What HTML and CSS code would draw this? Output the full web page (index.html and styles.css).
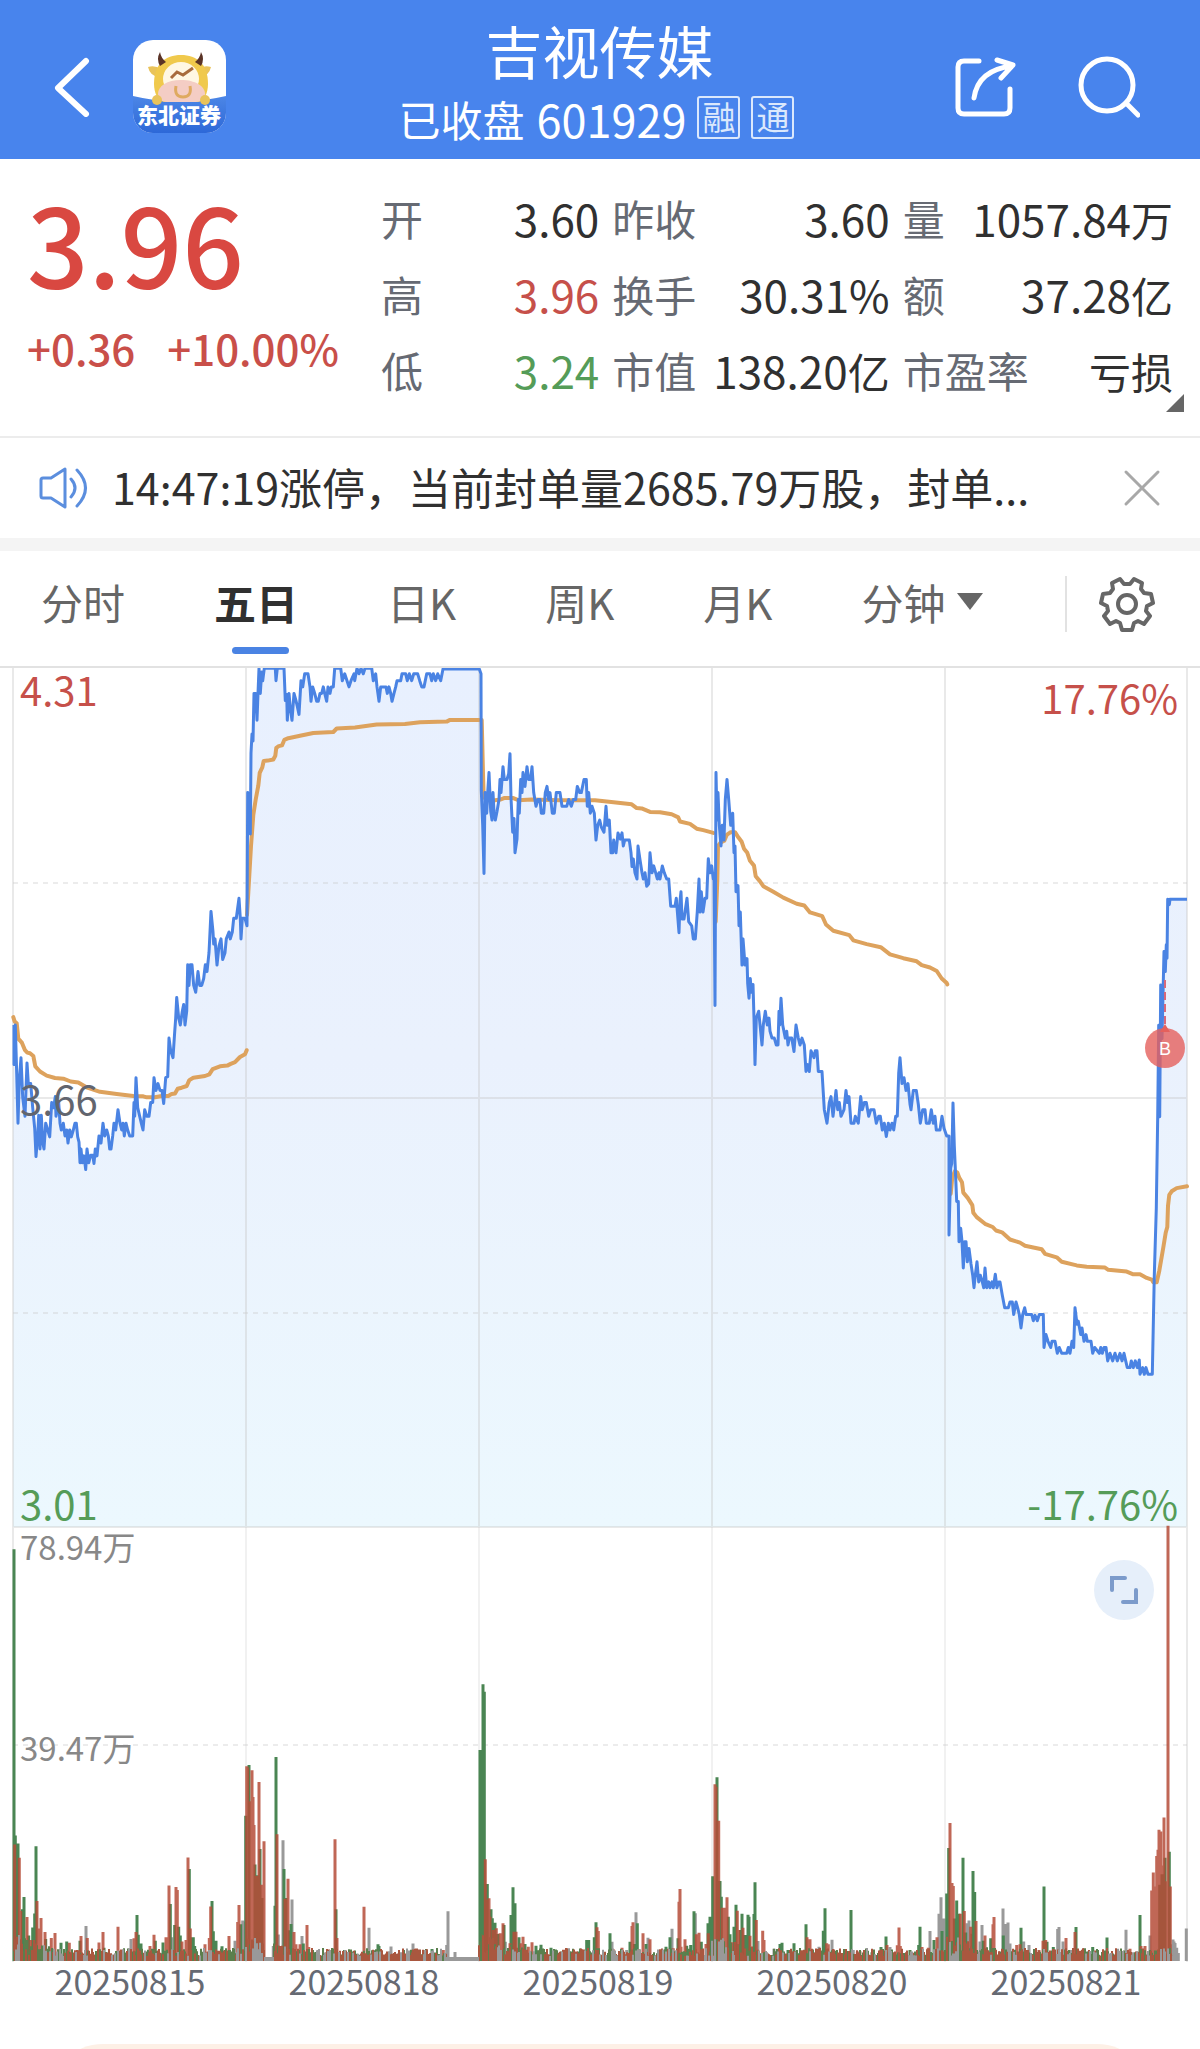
FILE: index.html
```html
<!DOCTYPE html>
<html lang="zh-CN">
<head>
<meta charset="utf-8">
<meta name="viewport" content="width=device-width, initial-scale=1">
<title>吉视传媒 601929</title>
<link rel="stylesheet" href="styles.css">
</head>
<body>
<header class="topbar">
  <div class="topbar-side">
    <button class="icon-btn" type="button" aria-label="返回">
      <svg width="40" height="60" viewBox="0 0 40 60" fill="none" stroke="#fff" stroke-width="6" stroke-linecap="round" stroke-linejoin="round"><path d="M33 4 5 31l28 26"/></svg>
    </button>
    <a class="broker" href="#" aria-label="东北证券">
      <svg width="93" height="93" viewBox="0 0 93 93">
        <defs>
          <clipPath id="logo-clip"><rect width="93" height="93" rx="20"/></clipPath>
          <linearGradient id="logo-blue" x1="0" y1="0" x2="0" y2="1"><stop offset="0" stop-color="#4c86e6"/><stop offset="1" stop-color="#2d68d8"/></linearGradient>
        </defs>
        <g clip-path="url(#logo-clip)">
          <rect width="93" height="93" fill="#fff"/>
          <path d="M0 56q46 11 93 0v37H0z" fill="url(#logo-blue)"/>
          <path d="M15 27q7-2 13 2l-2 8q-9-1-11-10zM78 27q-7-2-13 2l2 8q9-1 11-10z" fill="#e9c35a"/>
          <path d="M21 44c0-20 11-29 27-29s27 9 27 29c0 9-4 17-10 18H31c-6-1-10-9-10-18z" fill="#f0c94c"/>
          <path d="M27 12q-4 7 0 14l6-4q-5-4-6-10zM68 12q4 7 0 14l-6-4q5-4 6-10z" fill="#5a3326"/>
          <ellipse cx="48" cy="39" rx="18" ry="17" fill="#fff7e4"/>
          <path d="M38 38l6-6 6 3 10-7" fill="none" stroke="#a86b3d" stroke-width="3"/>
          <path d="M25 54c0-8 9-14 23-14s24 6 24 14c0 5-4 8-9 8H34c-5 0-9-3-9-8z" fill="#f4cdc4"/>
          <path d="M43 46q-2 11 7 11t7-11" fill="none" stroke="#dfaa60" stroke-width="3"/>
          <circle cx="24" cy="60" r="5" fill="#e9c35a"/><circle cx="72" cy="60" r="5" fill="#e9c35a"/>
        </g>
        <text x="46" y="83" text-anchor="middle" class="broker-name">东北证券</text>
      </svg>
    </a>
  </div>
  <div class="heading">
    <h1>吉视传媒</h1>
    <p class="subline"><span class="state">已收盘</span><span class="code">601929</span><span class="tag">融</span><span class="tag">通</span></p>
  </div>
  <div class="topbar-side topbar-actions">
    <button class="icon-btn" type="button" aria-label="分享">
      <svg width="62" height="62" viewBox="0 0 62 62" fill="none" stroke="#fff" stroke-width="5" stroke-linecap="round" stroke-linejoin="round"><path d="M25 5H10q-6 0-6 6v41q0 6 6 6h40q6 0 6-6V33M20 42Q24 14 58 10M43 4l16 5-12 13"/></svg>
    </button>
    <button class="icon-btn" type="button" aria-label="搜索">
      <svg width="62" height="62" viewBox="0 0 62 62" fill="none" stroke="#fff" stroke-width="5" stroke-linecap="round"><circle cx="29" cy="29" r="26"/><path d="M48 47l12 12"/></svg>
    </button>
  </div>
</header>

<section class="quote">
  <div class="last">
    <strong class="price">3.96</strong>
    <p class="change"><span>+0.36</span><span>+10.00%</span></p>
  </div>
  <dl class="stats">
    <div><dt>开</dt><dd>3.60</dd></div>
    <div><dt>昨收</dt><dd>3.60</dd></div>
    <div><dt>量</dt><dd>1057.84<span class="unit">万</span></dd></div>
    <div><dt>高</dt><dd class="up">3.96</dd></div>
    <div><dt>换手</dt><dd>30.31%</dd></div>
    <div><dt>额</dt><dd>37.28<span class="unit">亿</span></dd></div>
    <div><dt>低</dt><dd class="down">3.24</dd></div>
    <div><dt>市值</dt><dd>138.20<span class="unit">亿</span></dd></div>
    <div><dt>市盈率</dt><dd><span class="unit">亏损</span></dd></div>
  </dl>
  <svg class="more" width="18" height="18" viewBox="0 0 18 18"><path d="M18 0v18H0z" fill="#666"/></svg>
</section>

<section class="notice">
  <svg width="50" height="44" viewBox="0 0 50 44" fill="none" stroke="#5b8ede" stroke-width="3" stroke-linecap="round" stroke-linejoin="round"><path d="M26 3v38L12 32H4q-2 0-2-2V14q0-2 2-2h8zM32 13q8 9 0 18M38 4q17 18 0 36"/></svg>
  <p>14:47:19涨停，当前封单量2685.79万股，封单...</p>
  <button class="icon-btn" type="button" aria-label="关闭">
    <svg width="38" height="38" viewBox="0 0 38 38" stroke="#a8a8a8" stroke-width="3" stroke-linecap="round"><path d="M3 3l32 32M35 3 3 35"/></svg>
  </button>
</section>

<nav class="tabs">
  <div class="periods">
    <button type="button">分时</button>
    <button type="button" class="active">五日</button>
    <button type="button">日K</button>
    <button type="button">周K</button>
    <button type="button">月K</button>
    <button type="button" class="menu">分钟<svg width="26" height="17" viewBox="0 0 26 17"><path d="M0 0h26L13 17z" fill="#666"/></svg></button>
  </div>
  <button type="button" class="settings" aria-label="设置">
    <svg width="56" height="56" viewBox="-28 -28 56 56" fill="none" stroke="#666" stroke-width="4" stroke-linejoin="round"><path d="M-5 26H5L7 19 11 17 17 20 23 12 19 7 20 2 26-1 24-10 17-11 14-15 15-21 7-25 3-20H-3L-7-25-15-21-14-15-17-11-24-10-26-1-20 2-19 7-23 12-17 20-11 17-7 19z"/><circle r="9"/></svg>
  </button>
</nav>

<main class="chart">
  <svg class="plot" viewBox="0 0 1200 1294" aria-label="五日走势">
    <defs>
      <linearGradient id="area-fill" gradientUnits="userSpaceOnUse" x1="0" y1="0" x2="0" y2="859"><stop offset="0" stop-color="#e8f0fe"/><stop offset=".45" stop-color="#eaf1fd"/><stop offset="1" stop-color="#ecf8fe"/></linearGradient>
    </defs>
    <path id="area" fill="url(#area-fill)"/>
    <g fill="none" stroke="#c8c8c8" stroke-opacity=".4" stroke-width="2">
      <path d="M13 0V1294M1187 0V1294M246 0V859M479 0V859M712 0V859M945 0V859M13 430H1187M13 859H1187"/>
      <path d="M246 859V1294M479 859V1294M712 859V1294M945 859V1294" stroke-opacity=".25"/>
      <path d="M13 215H1187M13 645H1187M13 1077H1187" stroke-dasharray="5 5" stroke-opacity=".35"/>
    </g>
    <g id="average" fill="none" stroke="#dda25d" stroke-width="4" stroke-linejoin="round" stroke-linecap="round"></g>
    <path id="price" fill="none" stroke="#4a83e3" stroke-width="3" stroke-linejoin="round"/>
    <g fill="none">
      <g stroke-width="3">
        <path id="vol-flat" stroke="#999"/>
        <path id="vol-down" stroke="#4a8553"/>
        <path id="vol-up" stroke="#b54c38" stroke-opacity=".85"/>
      </g>
      <g stroke-width="2">
        <path id="noise-down" stroke="#5b7f4d"/>
        <path id="noise-up" stroke="#a9573f"/>
        <path id="noise-flat" stroke="#999"/>
      </g>
    </g>
    <path d="M1165 312V360" stroke="#d8697b" stroke-width="2" stroke-dasharray="8 4"/>
    <path d="M1160 364l5-8 5 8z" fill="#e5605c"/>
    <circle cx="1165" cy="380" r="20" fill="#e5605c" fill-opacity=".8"/>
    <text x="1165" y="387" text-anchor="middle" class="buy">B</text>
  </svg>
  <span class="label top-left up">4.31</span>
  <span class="label middle">3.66</span>
  <span class="label low down">3.01</span>
  <span class="label top-right up">17.76%</span>
  <span class="label low-right down">-17.76%</span>
  <span class="label vol vol-max">78.94万</span>
  <span class="label vol vol-mid">39.47万</span>
  <button class="expand" type="button" aria-label="全屏">
    <svg width="32" height="32" viewBox="0 0 32 32" fill="none" stroke="#7c9bcb" stroke-width="4" stroke-linecap="round"><path d="M4 16V4h13M28 16v12H15"/></svg>
  </button>
</main>
<div class="dates"><time>20250815</time><time>20250818</time><time>20250819</time><time>20250820</time><time>20250821</time></div>
<div class="sheet"><div class="sheet-card"></div></div>
<script src="chart.js"></script>
</body>
</html>
```
FILE: styles.css
```css
* { box-sizing: border-box; }
body {
  margin: 0;
  background: #fff;
  color: #303030;
  font-family: "Noto Sans CJK SC", "Noto Sans", sans-serif;
  font-size: 42px;
  line-height: 60px;
}
h1, p, dl, dd { margin: 0; }
button {
  padding: 0;
  border: 0;
  background: none;
  color: inherit;
  font: inherit;
}
svg { display: block; }
.up { color: #c6504a; }
.down { color: #559c58; }

.topbar {
  display: grid;
  grid-template-columns: 1fr auto 1fr;
  height: 159px;
  padding: 0 60px 0 53px;
  background: #4884ed;
  color: #fff;
}
.topbar-side {
  display: flex;
  align-items: center;
  gap: 40px;
  padding-top: 14px;
}
.topbar-actions { justify-content: flex-end; gap: 62px; }
.broker-name { font-size: 21px; font-weight: 900; fill: #fff; }
.heading { text-align: center; }
h1 {
  padding: 11px 0 0 6px;
  font-size: 57px;
  font-weight: 400;
  line-height: 76px;
}
.subline {
  display: flex;
  align-items: center;
  height: 64px;
}
.state { margin-right: 12px; }
.code { font-size: 45px; }
.tag {
  width: 43px;
  height: 43px;
  margin: 0 0 4px 11px;
  border: 2px solid #dbe8fc;
  border-radius: 3px;
  color: #dbe8fc;
  font-size: 33px;
  font-weight: 400;
  line-height: 37px;
}

.quote {
  position: relative;
  display: flex;
  justify-content: space-between;
  height: 279px;
  padding: 21px 27px 0 27px;
  border-bottom: 2px solid #ececec;
}
.last { color: #c94f49; font-weight: 500; }
.price {
  display: block;
  padding-top: 6px;
  color: #d94841;
  font-size: 108px;
  font-weight: 500;
  line-height: 110px;
}
.change {
  display: flex;
  gap: 32px;
  padding-top: 22px;
}
.stats {
  display: grid;
  grid-template-columns: 218fr 277fr 270fr;
  grid-auto-rows: 76px;
  column-gap: 13px;
  flex: 0 0 792px;
}
.stats div { display: flex; justify-content: space-between; align-items: center; white-space: nowrap; }
.stats dt { color: #666a73; }
.stats dd { font-size: 44px; }
.unit { font-size: 42px; }
.more { position: absolute; right: 16px; bottom: 24px; }

.notice {
  display: flex;
  align-items: center;
  height: 100px;
  padding: 0 39px;
}
.notice p {
  flex: 1;
  margin-left: 23px;
  padding-bottom: 4px;
  overflow: hidden;
  font-size: 43px;
  white-space: nowrap;
}

.tabs {
  display: flex;
  justify-content: space-between;
  align-items: center;
  height: 130px;
  padding: 0 45px 10px 41px;
  border-top: 13px solid #f4f4f4;
  border-bottom: 2px solid #e2e2e2;
  color: #666;
}
.periods {
  display: flex;
  gap: 89px;
  padding-bottom: 4px;
}
.periods button { position: relative; white-space: nowrap; }
.periods .active { color: #303030; font-weight: 700; }
.periods .active::after {
  content: "";
  position: absolute;
  bottom: -22px;
  left: 18px;
  width: 57px;
  height: 7px;
  border-radius: 4px;
  background: #4a83e3;
}
.periods .menu { display: flex; align-items: center; gap: 12px; }
.settings {
  padding-left: 32px;
  border-left: 2px solid #e2e2e2;
}

.chart { position: relative; }
.plot { width: 100%; height: auto; }
.buy { fill: #fff; font: 18px "Liberation Sans", sans-serif; }
.label {
  position: absolute;
  left: 20px;
  font-size: 40px;
  line-height: 40px;
}
.top-left { top: 1px; }
.middle { top: 410px; color: #62656e; }
.low { top: 815px; }
.top-right { top: 9px; right: 22px; left: auto; }
.low-right { top: 815px; right: 22px; left: auto; }
.vol { color: #888; font-size: 33px; }
.vol-max { top: 858px; }
.vol-mid { top: 1059px; }
.expand {
  position: absolute;
  top: 892px;
  right: 46px;
  display: grid;
  place-items: center;
  width: 60px;
  height: 60px;
  border-radius: 50%;
  background: #e6effa;
}
.dates {
  display: grid;
  grid-template-columns: repeat(5, 1fr);
  height: 82px;
  padding: 0 17px 0 13px;
  color: #666a73;
  font-size: 34px;
  line-height: 38px;
  text-align: center;
}
.sheet { height: 5px; padding: 0 48px; overflow: hidden; }
.sheet-card { height: 110px; border-radius: 55px; background: #fdf0e6; }
```
FILE: chart.js
```js
// Each run of samples is digitised on its own grid: x0, y0 and the units per pixel.
const GRID = {
  left: [0, -8, 3, 2.904],
  middle: [460, -8, 3, 2.904],
  right: [900, 192, 3, 2.24]
};
const toPoints = (grid, text) => {
  const [x0, y0, kx, ky] = GRID[grid];
  return text.trim().split(/\s+/).map(pair => {
    const [x, y] = pair.split(',').map(Number);
    return (x0 + x / kx).toFixed(1) + ' ' + (y0 + y / ky).toFixed(1);
  });
};

const price = [
  ...toPoints('left', `42,1060 42,1175 46,1060 50,1200 54,1345 58,1220 63,1155 68,1270 75,1325 81,1170 85,1230 92,1230 98,1300 104,1360 108,1442 113,1380 116,1322 120,1420 124,1322 128,1400 132,1420 137,1345 143,1365 149,1385 155,1285 161,1300 166,1268 168,1325 176,1285 180,1345 184,1365 190,1345 195,1382 200,1365 204,1403 209,1365 214,1385 220,1365 225,1345 229,1345 233,1385 237,1400 240,1460 243,1420 247,1460 252,1440 257,1480 261,1420 266,1460 272,1438 278,1438 282,1462 286,1420 291,1440 297,1382 303,1403 309,1345 314,1382 320,1365 325,1382 329,1420 333,1420 338,1382 342,1345 347,1365 354,1306 360,1345 365,1365 369,1345 373,1382 378,1345 383,1365 389,1382 398,1382 402,1285 404,1325 408,1213 413,1300 419,1325 424,1345 429,1365 434,1306 440,1325 447,1325 452,1285 458,1285 462,1213 468,1250 474,1230 480,1250 486,1250 491,1288 497,1213 503,1210 507,1098 512,1135 519,1155 524,1080 527,1040 530,980 536,1040 541,1060 547,1020 551,1000 555,1060 560,1020 563,885 567,945 571,885 576,885 581,945 587,965 594,905 599,945 605,945 611,925 616,885 621,905 627,850 633,730 639,790 641,825 645,810 651,886 657,830 663,810 668,870 675,850 679,810 687,790 691,810 697,790 701,750 709,750 717,692 721,750 723,810 727,750 735,750 741,772 743,385 747,480 751,505 753,270 756,215 759,235 762,97 767,97 771,175 774,97 777,24 781,97 785,35 788,60 793,24 826,24 828,60 832,24 852,24 856,118 860,100 862,175 867,97 871,140 876,175 882,97 888,118 892,135 897,158 903,60 908,78 914,40 924,40 930,78 933,120 938,78 944,97 950,120 955,120 960,97 965,97 970,78 974,97 980,120 984,78 990,97 994,78 1000,78 1004,24 1022,24 1027,60 1034,40 1041,60 1047,78 1053,60 1062,40 1064,60 1071,24 1077,40 1083,24 1090,40 1095,24 1115,24 1120,60 1127,40 1131,78 1137,120 1142,78 1158,78 1162,97 1167,78 1172,97 1176,120 1182,97 1187,78 1191,60 1202,60 1206,40 1217,40 1222,60 1228,40 1235,60 1241,40 1253,40 1259,60 1265,78 1272,78 1280,40 1290,40 1295,60 1300,40 1307,60 1313,40 1322,60 1329,26 1438,26`),
  ...toPoints('middle', `63,40 64,380 68,480 72,620 75,385 80,445 83,385 87,327 92,440 96,465 99,385 102,440 106,465 111,440 117,405 120,347 123,385 129,310 133,347 141,347 146,330 150,272 153,400 158,500 162,460 165,560 171,520 175,405 178,445 182,347 186,385 189,327 195,367 201,310 206,347 212,347 216,310 221,385 228,425 234,405 240,405 244,445 251,445 256,385 261,367 266,405 270,385 277,445 283,445 289,385 300,385 306,425 320,425 326,405 334,425 340,405 347,405 352,367 359,385 364,385 372,347 379,347 382,425 386,385 391,445 396,425 403,445 408,523 413,480 419,465 424,485 432,500 438,425 442,480 448,465 453,560 458,560 461,523 468,560 474,502 481,520 486,502 490,540 494,523 508,523 513,560 516,600 520,578 525,618 531,636 534,540 540,580 546,618 550,636 555,618 560,657 566,650 570,560 576,618 581,598 587,618 592,636 597,618 600,636 607,598 613,618 620,636 626,636 632,715 645,715 649,692 657,792 660,700 663,673 666,752 672,752 681,692 686,760 695,772 700,810 706,810 712,730 717,636 720,732 724,673 729,732 735,692 740,692 745,577 750,618 755,598 760,636 762,620 765,1003 768,327 771,465 774,385 778,480 783,540 787,480 792,523 796,405 801,347 806,405 812,480 818,445 822,560 825,540 828,673 834,655 837,772 841,732 846,886 849,810 855,886 861,867 863,940 867,982 871,925 874,965 879,942 882,1040 885,1175 889,1040 896,1020 906,1118 910,1060 916,1020 922,1060 927,1040 930,1078 936,1098 943,1098 949,1118 954,1118 957,1020 959,1060 963,982 968,1060 976,1098 980,1078 984,1118 988,1098 995,1098 1002,1137 1008,1060 1015,1098 1020,1118 1026,1098 1033,1118 1038,1195 1043,1175 1048,1195 1053,1135 1062,1155 1066,1135 1071,1135 1075,1195 1086,1195 1093,1306 1101,1345 1108,1285 1113,1268 1119,1325 1124,1285 1128,1250 1133,1306 1138,1285 1143,1325 1152,1306 1158,1250 1162,1285 1167,1268 1173,1345 1182,1345 1186,1325 1195,1345 1202,1268 1207,1306 1213,1285 1219,1285 1226,1325 1232,1306 1242,1306 1249,1345 1256,1325 1261,1325 1267,1365 1273,1345 1279,1384 1285,1345 1290,1365 1296,1345 1301,1365 1307,1325 1312,1325 1316,1200 1320,1155 1326,1230 1332,1213 1338,1250 1344,1230 1350,1290 1353,1306 1360,1250 1369,1250 1375,1290 1381,1345 1388,1306 1395,1306 1399,1345 1408,1345 1414,1306 1420,1345 1425,1325 1429,1365 1440,1365 1446,1325 1452,1360 1460,1382 1464,1382`),
  ...toPoints('right', `147,618 147,840 152,690 155,680 159,544 163,640 166,690 170,765 175,765 177,855 182,825 186,855 190,914 194,855 198,855 202,900 207,870 213,905 218,930 222,958 226,930 231,900 236,945 241,930 247,945 251,958 255,914 260,958 266,945 270,958 276,945 280,958 286,928 291,958 296,945 300,945 307,975 314,1003 325,1003 330,990 337,990 341,1018 348,990 353,1003 358,1018 363,1048 368,1018 374,1003 378,1018 395,1018 400,1032 405,1020 412,1032 418,1018 430,1018 432,1092 438,1063 444,1078 452,1092 456,1078 465,1078 472,1105 478,1092 485,1105 500,1105 505,1092 510,1105 516,1078 521,1092 525,1003 531,1040 535,1033 542,1063 546,1048 552,1078 558,1063 562,1078 573,1078 578,1105 584,1092 598,1105 602,1092 607,1105 612,1092 618,1092 623,1122 630,1105 638,1122 645,1105 652,1122 660,1105 666,1122 672,1105 677,1122 682,1137 690,1137 694,1122 700,1137 706,1122 712,1137 718,1120 720,1152 728,1137 733,1152 738,1137 744,1152 757,1152 763,930 769,780 773,575 776,370 779,575 782,280 786,400 792,205 796,250 799,190 801,220 803,88 808,100 810,88 861,88`)
];
const line = 'M' + price.join('L');
document.getElementById('price').setAttribute('d', line);
document.getElementById('area').setAttribute('d', line + 'V859H13V357Z');

const averages = [
  toPoints('left', `40,1037 44,1050 50,1055 55,1100 60,1105 66,1112 75,1133 82,1140 90,1142 100,1150 106,1180 120,1195 140,1207 165,1214 190,1216 212,1224 235,1227 262,1242 300,1254 350,1260 400,1266 430,1267 440,1270 465,1270 485,1266 505,1266 515,1260 525,1259 533,1245 545,1242 560,1237 568,1220 580,1213 615,1208 628,1203 638,1188 660,1180 682,1178 692,1173 705,1168 720,1153 735,1145 740,1133`),
  toPoints('left', `741,740 747,640 753,540 760,450 767,405 775,365 779,328 787,312 791,293 803,292 820,289 826,278 829,255 836,250 846,248 853,232 865,227 900,220 940,212 1000,209 1010,199 1065,196 1130,187 1215,186 1260,181 1340,179 1350,174 1438,174`),
  toPoints('middle', `65,174 69,330 71,400 100,408 122,405 132,401 160,401 175,407 215,405 300,407 405,407 440,411 515,419 530,430 545,431 570,441 600,442 635,448 655,457 660,469 690,476 710,490 730,494 760,502`),
  toPoints('middle', `767,760 772,640 774,540 782,530 793,525 800,508 812,500 825,500 835,515 845,528 852,548 862,560 870,583 882,597 887,628 900,643 910,657 940,673 970,690 1010,708 1033,713 1050,733 1087,744 1098,768 1120,786 1168,799 1180,814 1220,825 1262,834 1290,855 1330,866 1370,875 1385,886 1410,893 1430,903 1445,925 1460,938 1462,942`),
  toPoints('right', `152,748 157,710 165,697 172,700 178,712 186,722 190,745 203,757 217,773 220,790 230,800 255,815 278,822 288,830 306,834 330,850 360,857 375,864 425,872 435,882 470,890 485,900 530,908 560,911 615,913 625,918 680,922 700,928 720,928 740,936 755,940 760,946 770,946 778,920 790,868 797,835 802,822 804,775 808,750 815,742 830,735 861,731`)
];
document.getElementById('average').innerHTML = averages.map(p => `<path d="M${p.join('L')}"/>`).join('');

// Volume peaks as "x,top" followed by u (up), d (down) or f (flat).
const BASE = 1293;
const paths = { u: '', d: '', f: '' };
const addPeaks = (x0, bottom, ky, text) => {
  for (const item of text.trim().split(/\s+/)) {
    const kind = item.slice(-1);
    const [x, y] = item.slice(0, -1).split(',').map(Number);
    paths[kind] += `M${(x0 + x / 3).toFixed(1)} ${BASE}V${(BASE - (bottom - y) / ky).toFixed(1)}`;
  }
};
addPeaks(0, 1318, 2.856, `42,142d 46,960d 44,985u 54,982d 58,1023u 48,1105d 62,1175u 72,1135d 67,1170d 81,1192u 86,1245d 92,1258u 98,1222d 104,1182d 108,990d 111,1147u 115,1225u 123,1195u 135,1235u 137,1255d 154,1252u 165,1238u 183,1266d 200,1262d 208,1266u 243,1247u 240,1260d 258,1218f 262,1252u 297,1265u 309,1235u 312,1280d 354,1220u 393,1255f 402,1253u 408,1235u 411,1187d 415,1243d 423,1268d 450,1275u 462,1243u 466,1260d 489,1265d 498,1250u 507,1102u 511,1155d 515,1250f 524,1215d 528,1107u 532,1115u 536,1220d 541,1245d 546,1262u 558,1258u 564,1022u 568,1055d 571,1225u 576,1250d 580,1250d 584,1275d 615,1270u 628,1252u 632,1162u 636,1147d 640,1233d 648,1260d 666,1276d 687,1247u 705,1260f 713,1207u 717,1158u 722,1213d 728,1202f 732,1205f 737,903d 740,762u 743,765u 747,758d 751,862u 756,773u 759,850u 762,930u 765,1042d 770,1075u 777,807u 780,998d 773,1073d 783,1100u 786,1138d 792,976u 789,1235u 820,1275f 825,1160d 828,735d 831,956u 835,1242f 849,973f 852,1055d 855,1140u 858,1138d 864,1083u 868,1230d 873,1212d 876,1142f 882,1235u 888,1270u 900,1270u 906,1247f 910,1268d 921,1215u 926,1278u 1005,970u 1008,1170d 1011,1252u 1092,1163u 1107,1223f 1134,1270d 1137,1275d 1173,1277f 1239,1268f 1296,1284d 1330,1287u 1340,1272f 1344,1176f 1365,1292f`);
addPeaks(460, 963, 3, `60,330d 63,335d 66,330d 69,133d 73,155d 76,658u 82,732d 79,780u 87,775u 93,808d 90,830u 97,835d 100,870u 105,848d 109,865u 114,882d 120,880u 129,850u 132,855d 136,905f 150,910u 153,825d 159,742d 165,790d 162,875u 168,875u 177,892d 183,910u 189,890u 195,912d 205,920u 216,907u 228,917d 243,914d 240,930f 273,923d 312,935f 336,941u 380,900d 386,900d 403,892d 408,847d 411,862u 415,873u 450,880d 456,905f 460,928u 486,923u 500,930f 510,905d 516,858u 519,847u 528,817f 532,850d 523,912d 549,880u 558,912d 564,893f 570,898u 600,930u 618,920d 630,892d 636,866f 640,925u 654,895d 657,785u 660,747u 663,920u 675,898u 680,917d 692,915d 702,814d 706,820f 709,883u 717,878u 724,905d 738,912u 744,850d 750,830d 745,880u 758,709d 765,433u 768,440u 771,412d 776,542u 780,723d 784,770d 787,803u 791,810u 795,803u 801,772u 805,830d 810,883d 816,907u 822,860d 828,794d 832,812u 836,870u 841,870d 846,821d 849,863u 855,885d 864,824d 867,830d 870,887u 882,822d 885,727d 889,840u 894,903f 908,872u 912,900u 942,926f 960,912d 966,908d 984,930d 1002,910d 1038,853d 1041,892u 1050,898u 1055,930d 1077,920f 1090,872d 1095,805d 1100,910u 1105,913u 1116,899f 1120,930u 1173,811d 1180,930f 1192,935u`);
addPeaks(840, 1318, 2.856, `33,1172d 60,1290u 96,1293d 123,1278d 138,1248d 141,1272u 150,1278f 172,1273u 177,1222u 181,1275u 210,1287d 236,1272d 240,1220d 246,1278u 270,1232f 265,1280u 282,1258d 291,1250u 297,1183f 303,1136f 306,1232d 312,1197f 320,1125d 326,995d 330,924u 333,1100u 336,1095u 340,1104u 343,1197d 350,1145d 357,1183d 361,1183u 369,1023d 373,1175u 377,1237d 381,1210f 387,1202f 392,1220u 396,1240d 399,1061d 404,1121d 408,1204u 420,1262f 426,1215f 430,1260d 435,1245u 452,1253d 459,1213u 462,1192u 489,1168f 490,1245d 498,1212f 504,1208f 510,1268f 530,1272u 543,1223d 540,1270u 551,1262f 567,1272f 597,1287u 609,1260u 612,1105d 617,1258u 621,1263d 640,1278d 653,1227f 657,1221f 669,1262f 678,1252u 693,1287f 705,1235u 708,1221d 744,1290f 758,1278d 801,1251d 858,1229f 870,1283u 900,1187d 903,1275u 915,1275u 930,1245f 935,1117u 940,1065u 945,1105u 950,1018u 954,1000u 957,943u 959,1100d 962,948u 966,1070d 968,1045u 972,908u 975,1023d 978,1100u 981,1090u 984,75u 988,1006d 991,1105u 995,1270f 999,1257f 1002,1262f 1005,1267f 1010,1280f 1015,1295f 1039,1225f`);

// Small trades between the peaks, one bar per minute.
const noise = { u: '', d: '', f: '' };
let seed = 20250821;
const next = () => (seed = (seed * 16807) % 2147483647) / 2147483647;
for (let x = 14; x < 1174; x++) {
  const minute = (x - 13) % 233;
  const quiet = (x > 264 && x < 274) || x > 446 && x < 479;
  const roll = next();
  const open = minute < 45 && !quiet ? (45 - minute) * 0.35 : 0;
  const height = quiet ? 4 : 5 + next() * (8 + open);
  const kind = quiet ? 'f' : roll < 0.42 ? 'u' : roll < 0.8 ? 'd' : 'f';
  noise[kind] += `M${x} ${BASE}v${-height.toFixed(1)}`;
}
const names = { u: 'up', d: 'down', f: 'flat' };
for (const kind of 'udf') {
  document.getElementById('vol-' + names[kind]).setAttribute('d', paths[kind]);
  document.getElementById('noise-' + names[kind]).setAttribute('d', noise[kind]);
}
```
